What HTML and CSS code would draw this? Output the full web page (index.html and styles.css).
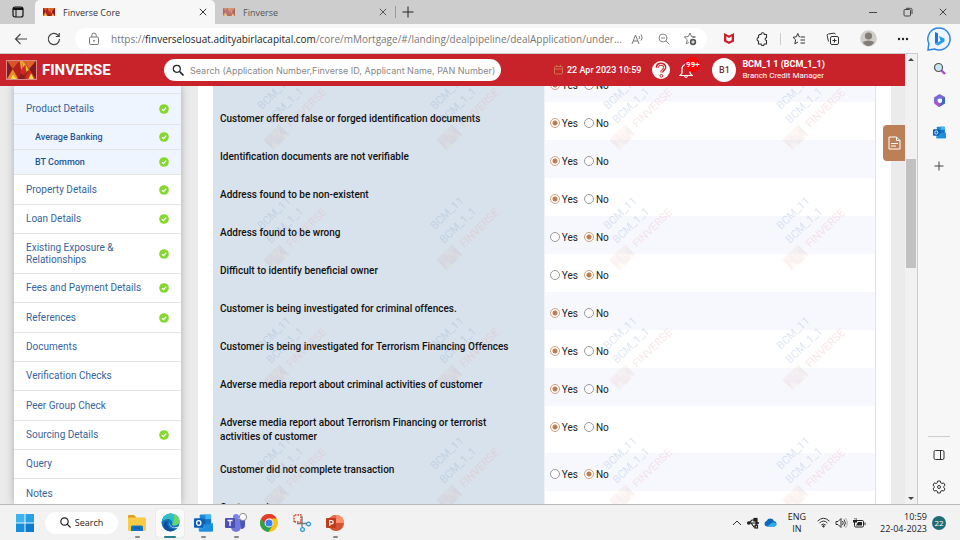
FILE: index.html
```
<!DOCTYPE html>
<html lang="en">
<head>
<meta charset="utf-8">
<title>Finverse Core</title>
<link rel="stylesheet" href="styles.css">
</head>
<body>
<svg class="defs" aria-hidden="true">
  <defs>
    <symbol id="check" viewBox="0 0 10 10"><circle cx="5" cy="5" r="4.8" fill="#84d82c"/><path d="M2.9 5.1l1.6 1.5 2.7-3" fill="none" stroke="#fff" stroke-width="1.3"/></symbol>
    <symbol id="brand" viewBox="0 0 30 20">
      <rect width="30" height="20" fill="#a32024"/>
      <path d="M0 0h13L6 9z" fill="#d9542b"/><path d="M0 0v20l6-11z" fill="#861a1f"/><path d="M0 20l6-11 6 11z" fill="#e98b2c"/>
      <path d="M4 20l2-5 4 5z" fill="#fbd94b"/><path d="M6 9l7-9 2 12-3 8z" fill="#b5201f"/>
      <path d="M13 0h4l-2 12z" fill="#ef9a35"/><path d="M17 0l6 10-8 5z" fill="#e9b62f"/><path d="M15 9l4-5 1 9-5 3z" fill="#cf2a22"/>
      <path d="M17 0h13l-7 9z" fill="#e0632e"/><path d="M30 0v20l-7-11z" fill="#7f1a20"/><path d="M30 20l-7-11-5 11z" fill="#c9311f"/>
      <path d="M22 20l3-6 3 6z" fill="#fbd94b"/><path d="M11 20l4-6 4 6z" fill="#8d1b1f"/>
    </symbol>
    <symbol id="x" viewBox="0 0 10 10"><path d="M1.8 1.8l6.4 6.4M8.2 1.8L1.8 8.2" fill="none" stroke="currentColor"/></symbol>
    <symbol id="outlook" viewBox="0 0 20 18">
      <rect x="6" y="0" width="12" height="15" rx="1" fill="#1b8ad8"/><path d="M12 0h6v5h-6z" fill="#42b8f2"/><path d="M12 5h6v5h-6z" fill="#1478c9"/><path d="M6 5h6v5H6z" fill="#0f5fa8"/>
      <path d="M5 9l7 4 8-4v8a1 1 0 0 1-1 1H6a1 1 0 0 1-1-1z" fill="#2fa5e8"/><path d="M5 17L20 9v8a1 1 0 0 1-1 1H6z" fill="#1d8fdc"/>
      <rect x="0" y="4" width="10" height="10" rx="1" fill="#0a62b8"/><ellipse cx="5" cy="9" rx="2.3" ry="2.5" fill="none" stroke="#fff" stroke-width="1.3"/>
    </symbol>
  </defs>
</svg>

<div class="browser">
  <header class="tabs">
    <button class="icon-btn tab-menu" aria-label="Tab actions"><svg width="12" height="12" viewBox="0 0 12 12"><rect x="1" y="1" width="10" height="10" rx="2" fill="none" stroke="#111" stroke-width="1.2"/><path d="M1 1.5h10V4H1z" fill="#111"/><path d="M4 4v7" stroke="#111"/></svg></button>
    <div class="tab active"><svg class="fav"><use href="#brand"/></svg><span>Finverse Core</span><button class="icon-btn" aria-label="Close tab"><svg width="10" height="10"><use href="#x"/></svg></button></div>
    <div class="tab"><svg class="fav"><use href="#brand"/></svg><span>Finverse</span><button class="icon-btn" aria-label="Close tab"><svg width="10" height="10"><use href="#x"/></svg></button></div>
    <button class="icon-btn new-tab" aria-label="New tab"><svg width="12" height="12" viewBox="0 0 12 12"><path d="M6 .5v11M.5 6h11" stroke="#222"/></svg></button>
    <div class="window-controls">
      <button class="icon-btn" aria-label="Minimise"><svg width="10" height="10"><path d="M1 5.500h8" stroke="#444"/></svg></button>
      <button class="icon-btn" aria-label="Restore"><svg width="10" height="10" viewBox="0 0 10 10" fill="none" stroke="#444"><rect x="1" y="2.500" width="6.500" height="6.500" rx="1"/><path d="M3 1.300h4.500a1.500 1.500 0 0 1 1.500 1.500V7"/></svg></button>
      <button class="icon-btn" aria-label="Close"><svg width="10" height="10"><use href="#x"/></svg></button>
    </div>
  </header>

  <div class="toolbar">
    <button class="icon-btn" aria-label="Back"><svg width="14" height="14" viewBox="0 0 14 14" fill="none" stroke="#444" stroke-width="1.1"><path d="M13 7H1.500M6.500 2l-5 5 5 5"/></svg></button>
    <button class="icon-btn" aria-label="Refresh"><svg width="14" height="14" viewBox="0 0 14 14" fill="none" stroke="#444" stroke-width="1.2"><path d="M12.500 7A5.600 5.600 0 1 1 11 3.200L12 4.300M12.200 1v3.500H8.800"/></svg></button>
    <div class="address">
      <svg width="12" height="14" viewBox="0 0 12 14" fill="none" stroke="#777"><rect x="1.500" y="5" width="9" height="7.500" rx="1.300"/><path d="M3.800 5V3.200a2.200 2.200 0 0 1 4.400 0V5"/><circle cx="6" cy="8.800" r=".5" fill="#777"/></svg>
      <span class="url">https://<b>finverselosuat.adityabirlacapital.com</b>/core/mMortgage/#/landing/dealpipeline/dealApplication/under...</span>
      <svg width="14" height="12" viewBox="0 0 14 12" fill="none" stroke="#777"><path d="M1 11l3.500-9L8 11M2.200 8h4.600M8 3q1.200 1.200 0 3M10 1.500q2.500 2.500 0 6"/></svg>
      <svg width="12" height="12" viewBox="0 0 12 12" fill="none" stroke="#888"><circle cx="5" cy="5" r="4"/><path d="M8 8l3.500 3.500M3 5h4"/></svg>
      <svg width="14" height="14" viewBox="0 0 14 14" fill="none" stroke="#777"><path d="M9.500 5.500l3-.5-3.900-.5L7 1 5.300 4.500 1.300 5l2.900 2.700-.8 4 2.400-1.200"/><circle cx="10" cy="10" r="3.200" fill="#555" stroke="none"/><path d="M10 8.300v3.400M8.300 10h3.400" stroke="#fff"/></svg>
    </div>
    <div class="tools">
      <svg width="12" height="13" viewBox="0 0 12 13"><path d="M1 1l5 2.500L11 1v8.500L6 12 1 9.500z" fill="#c8202b"/><path d="M3.300 4.200L6 6l2.700-1.800v4L6 9.600 3.300 8.200z" fill="#f7f7f7"/></svg>
      <svg width="14" height="14" viewBox="0 0 14 14" fill="none" stroke="#333" stroke-width="1.100"><path d="M4.500 2.500H6a1.700 1.700 0 0 1 3.400 0h2.100v3.200a1.400 1.400 0 0 0 0 2.800v3.500H9.300a1.600 1.600 0 0 1-3.200 0H3.500V9.200a1.900 1.900 0 0 1 0-3.700v-2z"/></svg>
      <i class="rule"></i>
      <svg width="14" height="14" viewBox="0 0 14 14" fill="none" stroke="#333"><path d="M8 4.800H7.200L5.800 1.500 4.300 4.800 1 5.300l2.600 2.500-.8 4L6 10M8.500 5H13M8.500 8H13M8.500 11H13"/></svg>
      <svg width="14" height="14" viewBox="0 0 14 14" fill="none" stroke="#333"><rect x="4.500" y="4.500" width="8" height="8" rx="1.500"/><path d="M8.500 6.500v4M6.500 8.500h4M2.500 9.500L1.200 3.800A1.500 1.500 0 0 1 2.400 2L8 1.200a1.500 1.500 0 0 1 1.500 1.200"/></svg>
      <svg width="17" height="17" viewBox="0 0 17 17"><circle cx="8.500" cy="8.500" r="8.300" fill="#d1cdc9"/><circle cx="8.500" cy="6" r="3.600" fill="#827d79"/><path d="M2.800 12q5.700-3 11.400 0-2 4-5.700 4t-5.700-4z" fill="#827d79"/></svg>
      <svg width="12" height="12" viewBox="0 0 12 12" fill="#222"><circle cx="2" cy="6" r="1.200"/><circle cx="6" cy="6" r="1.200"/><circle cx="10" cy="6" r="1.200"/></svg>
    </div>
  </div>

  <div class="viewport">
    <div class="app">
      <header class="app-bar">
        <svg class="logo" viewBox="0 0 30 20" preserveAspectRatio="none"><use href="#brand" width="30" height="20"/></svg>
        <strong class="app-name">FINVERSE</strong>
        <label class="search"><svg width="12" height="12" viewBox="0 0 12 12" fill="none" stroke="#222" stroke-width="1.200"><circle cx="4.800" cy="4.800" r="3.500"/><path d="M7.500 7.500l4 4" stroke-width="1.600"/></svg><input type="text" aria-label="Search" placeholder="Search (Application Number,Finverse ID, Applicant Name, PAN Number)"></label>
        <div class="date"><svg width="9" height="10" viewBox="0 0 9 10" fill="none" stroke="#d0714e"><rect x=".5" y="1.500" width="8" height="7.500" rx=".8"/><path d="M.5 4h8M2.500 0v2M6.500 0v2"/></svg><time>22 Apr 2023 10:59</time></div>
        <button class="icon-btn" aria-label="Help"><svg width="18" height="18" viewBox="0 0 18 18"><circle cx="9" cy="9" r="9" fill="#fff"/><path d="M5.200 6.800c0-5 7.600-4.600 7.600-.6 0 3-3 2.600-3 5.300" fill="none" stroke="#c8222b" stroke-width="3.200"/><path d="M5.500 6.500c.2-4.300 7-3.800 7-.4 0 2.800-2.900 2.500-2.900 5.200" fill="none" stroke="#fff"/><circle cx="9.400" cy="14.800" r="1.400" fill="#fff" stroke="#c8222b"/></svg></button>
        <button class="icon-btn bell" aria-label="Notifications"><svg width="14" height="18" viewBox="0 0 14 18" fill="none" stroke="#fff" stroke-width="1.200"><path d="M1 14.500h12L11 12V8q0-4-4-4.500Q3 4 3 8v4zM5.500 15q1.500 3 3 0M7 3.500V2"/></svg><span class="badge">99+</span></button>
        <div class="avatar">B1</div>
        <div class="user"><strong>BCM_1 1 (BCM_1_1)</strong><span>Branch Credit Manager</span></div>
      </header>

      <div class="page">
        <nav class="menu">
          <a href="#" class="sub blank"></a>
          <a href="#" class="open">Product Details<svg><use href="#check"/></svg></a>
          <a href="#" class="sub">Average Banking<svg><use href="#check"/></svg></a>
          <a href="#" class="sub">BT Common<svg><use href="#check"/></svg></a>
          <a href="#" class="roomy">Property Details<svg><use href="#check"/></svg></a>
          <a href="#">Loan Details<svg><use href="#check"/></svg></a>
          <a href="#" class="tall"><span>Existing Exposure &amp;<br>Relationships</span><svg><use href="#check"/></svg></a>
          <a href="#">Fees and Payment Details<svg><use href="#check"/></svg></a>
          <a href="#" class="roomy">References<svg><use href="#check"/></svg></a>
          <a href="#">Documents</a>
          <a href="#">Verification Checks</a>
          <a href="#" class="roomy">Peer Group Check</a>
          <a href="#">Sourcing Details<svg><use href="#check"/></svg></a>
          <a href="#">Query</a>
          <a href="#" class="roomy">Notes</a>
        </nav>

        <main class="card">
          <table class="checks">
            <tbody>
              <tr><th scope="row"></th><td><label><input type="radio" name="q0" checked>Yes</label><label><input type="radio" name="q0">No</label></td></tr>
              <tr><th scope="row">Customer offered false or forged identification documents</th><td><label><input type="radio" name="q1" checked>Yes</label><label><input type="radio" name="q1">No</label></td></tr>
              <tr><th scope="row">Identification documents are not verifiable</th><td><label><input type="radio" name="q2" checked>Yes</label><label><input type="radio" name="q2">No</label></td></tr>
              <tr><th scope="row">Address found to be non-existent</th><td><label><input type="radio" name="q3" checked>Yes</label><label><input type="radio" name="q3">No</label></td></tr>
              <tr><th scope="row">Address found to be wrong</th><td><label><input type="radio" name="q4">Yes</label><label><input type="radio" name="q4" checked>No</label></td></tr>
              <tr><th scope="row">Difficult to identify beneficial owner</th><td><label><input type="radio" name="q5">Yes</label><label><input type="radio" name="q5" checked>No</label></td></tr>
              <tr><th scope="row">Customer is being investigated for criminal offences.</th><td><label><input type="radio" name="q6" checked>Yes</label><label><input type="radio" name="q6">No</label></td></tr>
              <tr><th scope="row">Customer is being investigated for Terrorism Financing Offences</th><td><label><input type="radio" name="q7" checked>Yes</label><label><input type="radio" name="q7">No</label></td></tr>
              <tr><th scope="row">Adverse media report about criminal activities of customer</th><td><label><input type="radio" name="q8" checked>Yes</label><label><input type="radio" name="q8">No</label></td></tr>
              <tr><th scope="row">Adverse media report about Terrorism Financing or terrorist<br>activities of customer</th><td><label><input type="radio" name="q9" checked>Yes</label><label><input type="radio" name="q9">No</label></td></tr>
              <tr><th scope="row">Customer did not complete transaction</th><td><label><input type="radio" name="q10">Yes</label><label><input type="radio" name="q10" checked>No</label></td></tr>
              <tr><th scope="row">Customer is</th><td></td></tr>
            </tbody>
          </table>
          <svg class="watermark" aria-hidden="true">
            <defs>
              <pattern id="mark" x="39" y="-16" width="173" height="120" patternUnits="userSpaceOnUse">
                <g transform="translate(10 40) rotate(-44)"><text fill="#7d9fd0">BCM_11</text></g>
                <g transform="translate(19 54) rotate(-44)"><text fill="#7d9fd0">BCM_1_1</text></g>
                <g transform="translate(39 58) rotate(-44)"><text fill="#eda0a4">FINVERSE</text></g>
                <g transform="translate(24 67) rotate(-44)"><use href="#brand" x="-11" y="-7" width="22" height="15" opacity=".22"/></g>
              </pattern>
            </defs>
            <rect width="100%" height="100%" fill="url(#mark)"/>
          </svg>
        </main>
        <button class="notes-tab" aria-label="Notes"><svg width="13" height="14" viewBox="0 0 13 14" fill="none" stroke="#fff"><path d="M1 1h7.500L12 4.500V13H1zM8.500 1v3.500H12M3 7.500h7M3 10h5"/></svg></button>
      </div>
    </div>
    <div class="scrollbar"><span class="arrow up"></span><span class="thumb"></span><span class="arrow down"></span></div>
  </div>

  <aside class="side">
    <button class="icon-btn" aria-label="Bing chat"><svg width="24" height="24" viewBox="0 0 24 24"><path d="M12 1a11 11 0 1 1-4.500 21L1 23l.8-6.500A11 11 0 0 1 12 1z" fill="#eef7ff" stroke="#2f86e8" stroke-width="1.500"/><path d="M8 5l3 1.200v9L8 17z" fill="#1a73e0"/><path d="M12 9l5.500 2.500v3L11 18.500 8 17l5.500-3.200z" fill="#2a9cf0"/></svg></button>
    <button class="icon-btn" aria-label="Search"><svg width="13" height="13" viewBox="0 0 13 13"><path d="M8 8l4 4" stroke="#b146d8" stroke-width="2.400"/><circle cx="5.500" cy="5.500" r="4" fill="#c7e6f5" stroke="#555" stroke-width="1.200"/></svg></button>
    <button class="icon-btn" aria-label="Microsoft 365"><svg width="13" height="13" viewBox="0 0 13 13"><path d="M6.500 0L12 3v4L8 4.500 5 6v5L1 9V3.500z" fill="#7a6bd8"/><path d="M12 3.500V9.500L6.500 13 2 10l4 0 3-2V4.500z" fill="#3868c8"/><path d="M1 9l4-1 3 2-2 3z" fill="#b44fc8"/><circle cx="6.500" cy="6.500" r="2" fill="#f7f7f7"/></svg></button>
    <button class="icon-btn" aria-label="Outlook"><svg width="13" height="13"><use href="#outlook"/></svg></button>
    <button class="icon-btn" aria-label="Add"><svg width="10" height="10" viewBox="0 0 10 10"><path d="M5 .5v9M.5 5h9" stroke="#444"/></svg></button>
    <hr>
    <button class="icon-btn" aria-label="Toggle sidebar"><svg width="12" height="12" viewBox="0 0 12 12" fill="none" stroke="#333"><rect x="1" y="1.500" width="10" height="9" rx="1.500"/><path d="M7.500 1.500v9"/></svg></button>
    <button class="icon-btn" aria-label="Settings"><svg width="14" height="14" viewBox="0 0 14 14" fill="none" stroke="#333"><path d="M5.700 1h2.600l.4 1.800 1.300.7 1.700-.6 1.300 2.300L11.700 6.400v1.200L13 8.800l-1.300 2.300-1.700-.6-1.300.7-.4 1.800H5.700l-.4-1.800-1.300-.7-1.700.6L1 8.800l1.300-1.200V6.400L1 5.200l1.300-2.300 1.700.6 1.300-.7z"/><circle cx="7" cy="7" r="1.500"/></svg></button>
  </aside>
</div>

<footer class="taskbar">
  <button class="icon-btn" aria-label="Start"><svg width="18" height="18" viewBox="0 0 18 18" fill="#1590dc"><path d="M0 0h8.500v8.500H0z" fill="#3db4ee"/><path d="M9.500 0H18v8.500H9.500z" fill="#27a1e5"/><path d="M0 9.500h8.500V18H0z"/><path d="M9.500 9.500H18V18H9.500z" fill="#0c7ccf"/></svg></button>
  <button class="task-search"><svg width="11" height="11" viewBox="0 0 11 11" fill="none" stroke="#222" stroke-width="1.200"><circle cx="4.500" cy="4.500" r="3.700"/><path d="M7.200 7.200L10.500 10.500"/></svg>Search</button>
  <div class="apps">
    <button class="running" aria-label="File Explorer"><svg width="18" height="18" viewBox="0 0 18 18"><path d="M0 2a1 1 0 0 1 1-1h5l2 2v3H0z" fill="#dda01c"/><rect y="3.500" width="18" height="13.500" rx="1.200" fill="#fccb45"/><path d="M3 17v-4q0-1.500 1.500-1.500h9q1.500 0 1.500 1.500v4z" fill="#1474c4"/><path d="M6 14h6" stroke="#0b4f8f"/></svg></button>
    <button class="running current" aria-label="Microsoft Edge"><svg width="19" height="19" viewBox="0 0 19 19"><circle cx="9.500" cy="9.500" r="9" fill="#1272bd"/><path d="M.6 9C2 3 6 .5 10 .5c5 0 8.500 3.500 8.500 7.300 0 3-2.500 4.700-5 4.700-2 0-3-.8-2.300-1.800C12 8.500 10 6 7 6 4 6 1.500 7.500.6 9z" fill="#2fc0c4"/><path d="M12 .9c4 1.200 6.500 4.300 6.500 7 0 3-2.500 4.600-5 4.600-1.500 0-2.500-.5-2.400-1.300 2-1 3-6 .9-10.300z" fill="#6bd66a"/><path d="M7 8c-2 4 1 9 7 8.200-3 3-8 2.500-10.500-.5C1 12 3.500 8 7 8z" fill="#0d4f9c"/><path d="M9.500 8.300c-2 2 0 6 4 6.200 2 0 3.500-.5 5-1.700l-.5 1.500c-1 .6-2 .9-4.500.8-4-.3-6.500-4-4-6.800z" fill="#f3f3f3"/></svg></button>
    <button class="running" aria-label="Outlook"><svg width="19" height="18"><use href="#outlook"/></svg></button>
    <button class="running" aria-label="Teams"><svg width="22" height="19" viewBox="0 0 22 19"><circle cx="11" cy="4" r="3" fill="#7b83eb"/><path d="M6 6h10v8a5 5 0 0 1-10 0z" fill="#7077dc"/><path d="M15 7h5v5q0 4-4 4z" fill="#4d55b8"/><rect y="5" width="10" height="10" rx="1" fill="#4a50b5"/><path d="M2.500 7.500h5M5 7.500V13" stroke="#fff" stroke-width="1.300"/><circle cx="18" cy="4" r="3.600" fill="#fff" stroke="#888"/></svg></button>
    <button aria-label="Chrome"><svg width="18" height="18" viewBox="0 0 18 18"><circle cx="9" cy="9" r="9" fill="#fbc116"/><path d="M9 9l-7.800-4.500A9 9 0 0 0 8.500 18L13 11z" fill="#2da24c"/><path d="M1.200 4.500A9 9 0 0 1 16.800 4.500H9L5 10z" fill="#e33b2e"/><circle cx="9" cy="9" r="4.400" fill="#fff"/><circle cx="9" cy="9" r="3.500" fill="#3b7ded"/></svg></button>
    <button aria-label="Snipping Tool"><svg width="18" height="18" viewBox="0 0 18 18" fill="none"><path d="M1 8V1h7v7z" stroke="#d4472b" stroke-width="1.500" stroke-dasharray="1.600 1"/><path d="M9 2v11M4 9.500h10" stroke="#777" stroke-width="1.300"/><circle cx="15.500" cy="10" r="1.900" stroke="#2897dc" stroke-width="1.200"/><circle cx="9.500" cy="15.500" r="1.900" stroke="#2897dc" stroke-width="1.200"/></svg></button>
    <button class="running" aria-label="PowerPoint"><svg width="18" height="18" viewBox="0 0 18 18"><circle cx="10" cy="9" r="8" fill="#d35230"/><path d="M10 1a8 8 0 0 1 8 8h-8z" fill="#ff8f6b"/><path d="M10 1v8H2a8 8 0 0 1 8-8z" fill="#ed6c47"/><rect y="4" width="10" height="10" rx="1" fill="#c13b1b"/><path d="M3.700 12V6.500h1.800a1.600 1.600 0 0 1 0 3.300H3.700" fill="none" stroke="#fff" stroke-width="1.200"/></svg></button>
  </div>
  <div class="tray">
    <svg width="10" height="8" viewBox="0 0 10 8" fill="none" stroke="#333"><path d="M1 6l4-4 4 4"/></svg>
    <svg width="12" height="12" viewBox="0 0 12 12" fill="none" stroke="#222" stroke-width="1.200"><path d="M1 6h10M2 6l3-3h2M4 6l3 4h2"/><circle cx="1.800" cy="6" r="1.200" fill="#222"/><rect x="7" y="1.500" width="3" height="2.500" fill="#222"/><rect x="8" y="8.500" width="2.500" height="2.500"/><path d="M9 4.500L11.500 6 9 7.500z" fill="#222"/></svg>
    <svg width="13" height="9" viewBox="0 0 13 9"><path d="M3 8.500a2.800 2.800 0 0 1-.4-5.500A4 4 0 0 1 10 3a2.800 2.800 0 0 1 .4 5.500z" fill="#1068bd"/><path d="M3 8.500L8.500 4.200q3.500-.3 4 2.300-.2 1.800-2.100 2z" fill="#33a9f0"/></svg>
    <div class="lang">ENG<br>IN</div>
    <svg width="13" height="11" viewBox="0 0 13 11" fill="none" stroke="#333"><path d="M.7 4q5.800-5.500 11.600 0M2.500 6q4-3.800 8 0M4.300 8q2.200-2 4.400 0"/><circle cx="6.500" cy="9.300" r=".8" fill="#333"/></svg>
    <svg width="13" height="12" viewBox="0 0 13 12" fill="none" stroke="#333"><path d="M1 4.500h2l3-3v9l-3-3H1zM7.500 4q1.500 2 0 4M9 2.500q2.800 3.500 0 7"/><path d="M10.500 1q3.500 5 0 10" stroke="#aaa"/></svg>
    <svg width="13" height="12" viewBox="0 0 13 12"><rect x="1.500" y="3.500" width="9" height="6.500" rx="1.200" fill="none" stroke="#222"/><path d="M5 5h4v3.500H3z" fill="#222"/><path d="M11.500 5.500h1v2.500h-1zM1 1h1v2H0v2.500h4V3H3.500V1h-.8v2z" fill="#222"/></svg>
    <div class="clock">10:59<br>22-04-2023</div>
    <span class="count">22</span>
  </div>
</footer>
</body>
</html>
```
FILE: styles.css
```
* { box-sizing: border-box; }
body {
  margin: 0;
  height: 100vh;
  display: flex;
  flex-direction: column;
  overflow: hidden;
  background: #f7f7f7;
  color: #222;
  font-family: "Open Sans", "Noto Sans", sans-serif;
  font-size: 9px;
}
svg { display: block; flex: none; }
button { border: 0; padding: 0; background: none; color: inherit; font: inherit; }
.defs { position: absolute; width: 0; height: 0; }
.icon-btn { display: flex; align-items: center; justify-content: center; flex: none; }

.browser {
  flex: 1;
  min-height: 0;
  display: grid;
  grid-template: 24px 29px minmax(0, 1fr) / minmax(0, 1fr) 42px;
}
.tabs { grid-column: 1 / 3; display: flex; background: #cdcdcd; }
.tab-menu { width: 35px; }
.tab { display: flex; align-items: center; width: 180px; padding: 0 7px 0 8px; color: #555; }
.tab span { flex: 1; }
.tab.active { background: #f7f7f7; border-radius: 5px 5px 0 0; color: #333; }
.tab:not(.active) .fav { opacity: .55; }
.fav { width: 12px; height: 8px; margin-right: 8px; }
.new-tab { margin: 6px 0; padding-left: 6px; border-left: 1px solid #999; }
.window-controls { display: flex; gap: 25px; margin-left: auto; padding-right: 12px; color: #444; }

.toolbar { display: flex; align-items: center; gap: 19px; padding-left: 14px; }
.address {
  flex: 1;
  min-width: 0;
  display: flex;
  align-items: center;
  gap: 13px;
  height: 22px;
  padding: 0 10px 0 13px;
  margin-left: -5px;
  border-radius: 11px;
  background: #fff;
}
.url { flex: 1; min-width: 0; margin-left: -2px; color: #777; font-size: 10px; white-space: nowrap; }
.url b { color: #222; font-weight: 400; }
.tools { display: flex; align-items: center; gap: 20px; padding-right: 9px; margin-left: -3px; }
.rule { width: 1px; height: 12px; margin: 0 -9px; background: #ccc; }

.viewport { display: flex; min-width: 0; border: solid #ccc; border-width: 1px 1px 0 0; }
.app { flex: 1; min-width: 0; display: flex; flex-direction: column; font-family: Roboto, sans-serif; }
.app-bar {
  flex: none;
  display: flex;
  align-items: center;
  height: 32px;
  padding-left: 6px;
  background: #c8222b;
  color: #fff;
}
.logo { width: 31px; height: 20px; border: 1px solid #d88; }
.app-name { width: 127px; padding-left: 5px; font-size: 15px; }
.search { display: flex; align-items: center; flex: none; gap: 6px; width: 337px; height: 22px; padding-left: 8px; border-radius: 11px; background: #fff; }
.search input { flex: 1; min-width: 0; border: 0; padding: 0; outline: 0; background: none; font: 9px Inter, sans-serif; }
.search input::placeholder { color: #888; }
.date { display: flex; align-items: center; gap: 4px; margin: 0 11px 0 53px; font-weight: 500; white-space: nowrap; }
.bell { position: relative; margin-left: 9px; }
.badge { position: absolute; top: -4px; left: 6px; width: 15px; height: 15px; border-radius: 8px; background: #f00; color: #fff; font-size: 8px; font-weight: 700; line-height: 15px; }
.avatar { width: 24px; height: 24px; margin: 0 6px 0 19px; border-radius: 50%; background: #fff; color: #7c2a30; font-weight: 500; line-height: 24px; text-align: center; }
.user { display: flex; flex-direction: column; white-space: nowrap; line-height: 12px; }
.user span { font-size: 8px; }

.page { position: relative; flex: 1; min-height: 0; display: flex; gap: 17px; padding: 0 14px; overflow: hidden; background: #ebebeb; }
.menu { flex: none; width: 167px; background: #fff; box-shadow: 0 0 8px #aaa; }
.menu a {
  display: flex;
  align-items: center;
  justify-content: space-between;
  height: 29px;
  padding: 0 12px;
  border-top: 1px solid #e4e4e4;
  color: #38659b;
  font-size: 10px;
  line-height: 12px;
  text-decoration: none;
}
.menu svg { width: 10px; height: 10px; }
.menu .open, .menu .sub { background: #eef5fe; }
.menu .open { height: 31px; }
.menu .sub { height: 25px; padding-left: 21px; color: #1d5595; font-size: 9px; font-weight: 500; }
.menu .blank { height: 7px; border: 0; }
.menu .roomy { height: 30px; }
.menu .tall { height: 40px; }

.card { position: relative; flex: 1; min-width: 0; padding: 0 15px; background: #fff; }
.checks { width: 100%; margin-top: -22px; border-collapse: collapse; border-right: 1px solid #e2e2e2; }
.checks th { width: 50%; padding: 10px 7px 9px; background: #d8e2ec; color: #111; font-size: 10px; font-weight: 500; line-height: 14px; text-align: left; vertical-align: top; }
.checks td { height: 38px; padding: 14px 5px 10px; border-left: 1px solid #eef2f6; vertical-align: top; }
.checks tr:nth-child(odd) td { background: #f7f8fe; }
.checks tr:nth-child(even) td { background: #fff; }
.checks label { display: inline-flex; align-items: center; gap: 2px; height: 14px; margin-right: 6px; font-size: 10px; vertical-align: top; }
.checks input { appearance: none; width: 10px; height: 10px; margin: 0; border: 1px solid #999; border-radius: 50%; background: #fff; }
.checks input:checked { border-color: #d0a080; background: radial-gradient(circle, #bd7d52 2px, #fff 3px); }
.watermark { position: absolute; top: 0; left: 15px; width: calc(100% - 30px); height: 100%; pointer-events: none; opacity: .25; font-size: 11px; }
.notes-tab { position: absolute; right: 0; top: 39px; display: flex; align-items: center; justify-content: center; width: 22px; height: 36px; border-radius: 4px 0 0 4px; background: #bc8059; }

.scrollbar { display: flex; flex-direction: column; align-items: center; width: 12px; padding: 4px 0; background: #f1f1f1; }
.arrow { border: 3px solid transparent; }
.up { border-top: 0; border-bottom-color: #444; }
.down { margin-top: auto; border-bottom: 0; border-top-color: #444; }
.thumb { width: 10px; height: 109px; margin-top: 98px; background: #c1c1c1; }

.side { grid-column: 2; grid-row: 2 / 4; display: flex; flex-direction: column; align-items: center; padding: 2px 0 1px; }
.side .icon-btn { height: 32px; }
.side .icon-btn:first-child { height: 26px; }
.side .icon-btn:nth-child(5) { height: 36px; }
.side hr { width: 22px; margin: auto 0 2px; border: 0; border-top: 1px solid #ccc; }

.taskbar { flex: none; display: flex; align-items: center; height: 36px; padding: 0 14px 0 16px; border-top: 1px solid #bbb; background: #f2f2f2; }
.task-search { display: flex; align-items: center; justify-content: center; gap: 4px; width: 73px; height: 22px; margin: 0 5px 0 11px; border-radius: 11px; background: #fff; }
.apps { display: flex; gap: 5px; }
.apps button { position: relative; display: flex; align-items: center; justify-content: center; width: 28px; height: 28px; border-radius: 3px; }
.apps .current { background: #fafafa; box-shadow: 0 0 1px #bbb; }
.running::after { content: ""; position: absolute; bottom: -1px; width: 5px; height: 2px; border-radius: 1px; background: #888; }
.current::after { width: 12px; background: #27808c; }
.tray { display: flex; align-items: center; gap: 5px; margin-left: auto; line-height: 12px; }
.lang { width: 30px; text-align: center; }
.clock { width: 56px; text-align: right; }
.count { width: 14px; height: 14px; border-radius: 50%; background: #1f6b78; color: #fff; font-size: 8px; line-height: 14px; text-align: center; }
```
